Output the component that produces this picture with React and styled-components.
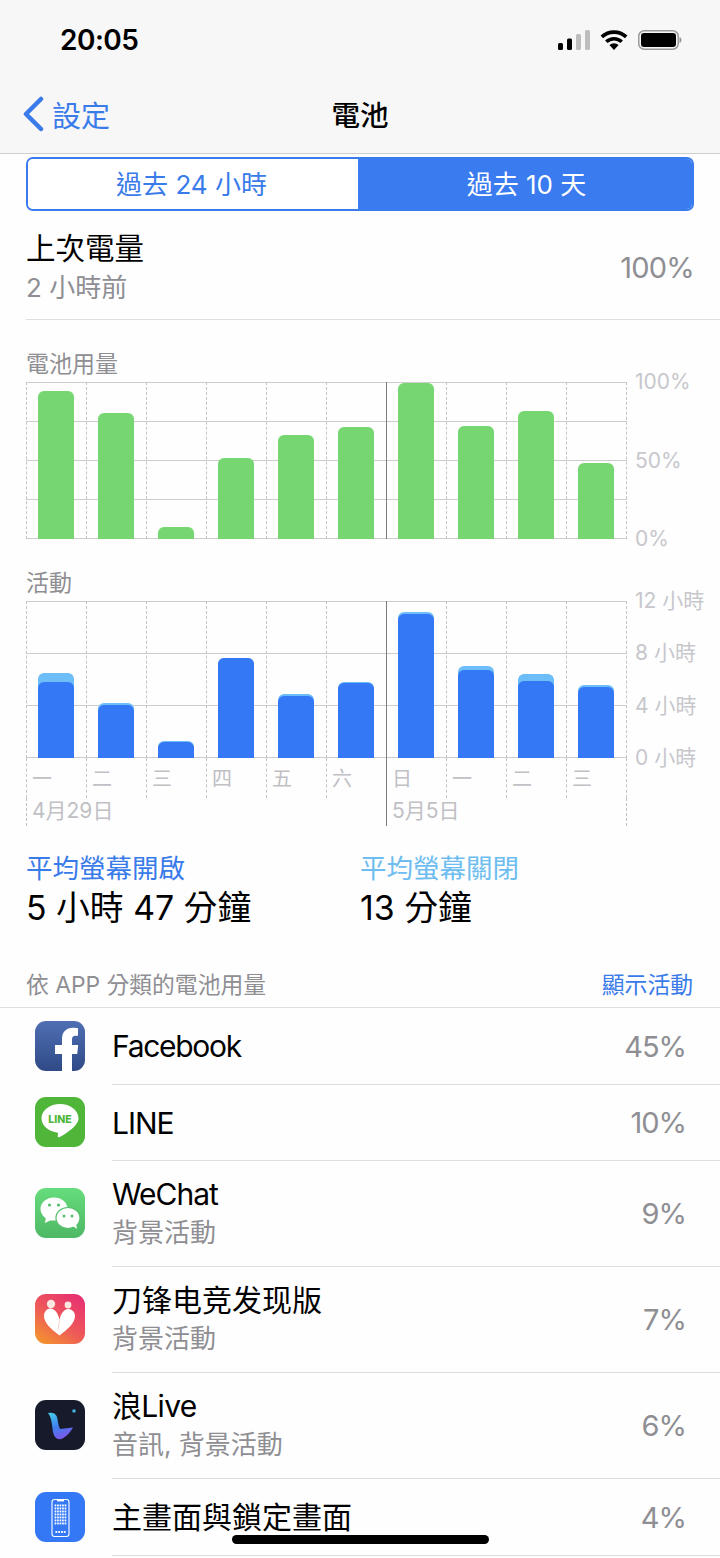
import styled, { createGlobalStyle } from "styled-components"

const batteryBars = [148, 126, 12, 81, 104, 112, 156, 113, 128, 76]
const activityBars = [
    { total: 85, screen: 76 },
    { total: 55, screen: 53 },
    { total: 17, screen: 16 },
    { total: 100, screen: 100 },
    { total: 64, screen: 62 },
    { total: 76, screen: 75 },
    { total: 146, screen: 144 },
    { total: 92, screen: 88 },
    { total: 84, screen: 77 },
    { total: 73, screen: 71 },
]
const days = ["一", "二", "三", "四", "五", "六", "日", "一", "二", "三"]

function FacebookIcon() {
    return (
        <svg width="50" height="50" viewBox="0 0 50 50">
            <defs>
                <linearGradient id="fb" x1="0" y1="0" x2="0" y2="1">
                    <stop offset="0" stopColor="#4f6fb4" />
                    <stop offset="1" stopColor="#2f4a86" />
                </linearGradient>
            </defs>
            <rect width="50" height="50" rx="11" fill="url(#fb)" />
            <path d="M37 50V33h5.200l1-9H37v-5.200c0-2.700.8-4 3.800-4H43V7.200c-.9-.2-2.900-.4-5-.4-6.600 0-11 4-11 11.200V24h-7v9h7v17z" fill="#fff" />
        </svg>
    )
}

function LineIcon() {
    return (
        <svg width="50" height="50" viewBox="0 0 50 50">
            <rect width="50" height="50" rx="11" fill="#4fb63a" />
            <path d="M25 7c-10.200 0-18.500 6.400-18.500 14.300 0 7.100 6.500 13 15.300 14.100 1.500.3 1.300 1 1 2.800-.1.800-.5 2.900 2 1.700 2.400-1.200 11-6.600 15-11 2.700-2.800 3.700-5 3.700-7.600C43.500 13.400 35.200 7 25 7z" fill="#fff" />
            <text x="25" y="25.500" textAnchor="middle" fontFamily="Inter, sans-serif" fontWeight="800" fontSize="10.500" fill="#4fb63a">LINE</text>
        </svg>
    )
}

function WeChatIcon() {
    return (
        <svg width="50" height="50" viewBox="0 0 50 50">
            <defs>
                <linearGradient id="wc" x1="0" y1="0" x2="0" y2="1">
                    <stop offset="0" stopColor="#66dc7c" />
                    <stop offset="1" stopColor="#4fb866" />
                </linearGradient>
            </defs>
            <rect width="50" height="50" rx="11" fill="url(#wc)" />
            <ellipse cx="19" cy="21" rx="13.500" ry="11.500" fill="#fff" />
            <path d="M11 29l-1 6 6-3z" fill="#fff" />
            <circle cx="14.500" cy="17" r="1.600" fill="#55bf6b" />
            <circle cx="23.500" cy="17" r="1.600" fill="#55bf6b" />
            <ellipse cx="33" cy="30" rx="12" ry="10.500" fill="#fff" stroke="#55bf6b" strokeWidth="1.200" />
            <path d="M38 38l4 3-1-6z" fill="#fff" />
            <circle cx="29" cy="28" r="1.500" fill="#55bf6b" />
            <circle cx="37" cy="28" r="1.500" fill="#55bf6b" />
        </svg>
    )
}

function HeartIcon() {
    return (
        <svg width="50" height="50" viewBox="0 0 50 50">
            <defs>
                <linearGradient id="ht" x1="0.85" y1="0" x2="0.15" y2="1">
                    <stop offset="0" stopColor="#e62f72" />
                    <stop offset="0.55" stopColor="#ee5a58" />
                    <stop offset="1" stopColor="#f3932e" />
                </linearGradient>
            </defs>
            <rect width="50" height="50" rx="11" fill="url(#ht)" />
            <circle cx="16" cy="10" r="4.200" fill="#fde6e0" />
            <circle cx="33" cy="11" r="3.400" fill="#fde6e0" />
            <path d="M24.500 41.500C16 35 9 29 9 22c0-4 2.500-7 6-7.500 4.500 0 8 4 9.500 11.500C26 19 29 15 33.500 15c4 .3 6.500 3.500 6.500 7 0 7-7 13-15.500 19.500z" fill="#fff" />
            <path d="M24.500 26l-1.500 10" fill="none" stroke="#f6c6c4" strokeWidth="0.800" />
        </svg>
    )
}

function LiveIcon() {
    return (
        <svg width="50" height="50" viewBox="0 0 50 50">
            <defs>
                <linearGradient id="lv" x1="0.1" y1="0" x2="0.5" y2="1">
                    <stop offset="0" stopColor="#46cbe6" />
                    <stop offset="0.55" stopColor="#3f7ff0" />
                    <stop offset="1" stopColor="#7d58e8" />
                </linearGradient>
            </defs>
            <rect width="50" height="50" rx="11" fill="#171a2b" />
            <path d="M13 13c4-1 8 0 9 4 1 4 1 8 3 12l13-1.500c-3 5.500-8 10.500-12 11.500-4 1-7-2-8-7-1-6-1-14-5-19z" fill="url(#lv)" />
            <circle cx="39" cy="11" r="1.800" fill="#3fb4e0" />
        </svg>
    )
}

function HomeIcon() {
    const dots = []
    for (let row = 0; row < 7; row++) {
        for (let col = 0; col < 5; col++) {
            dots.push(<rect key={`${row}-${col}`} x={19.6 + col * 2.5} y={12.5 + row * 3} width="1.700" height="1.900" fill="#fff" />)
        }
    }
    return (
        <svg width="50" height="50" viewBox="0 0 50 50">
            <rect width="50" height="50" rx="11" fill="#3478f6" />
            <rect x="17" y="7.500" width="17" height="37" rx="2.500" fill="none" stroke="#fff" strokeWidth="1.100" />
            <rect x="22" y="8" width="7" height="1.400" fill="#fff" />
            {dots}
            {[0, 1, 2, 3].map(i => (
                <rect key={i} x={20.4 + i * 2.8} y="39" width="1.800" height="1.900" fill="#fff" />
            ))}
        </svg>
    )
}

const apps = [
    { name: "Facebook", percent: "45%", icon: <FacebookIcon />, height: 77, spacing: -1.3 },
    { name: "LINE", percent: "10%", icon: <LineIcon />, height: 76, spacing: -1 },
    { name: "WeChat", sub: "背景活動", percent: "9%", icon: <WeChatIcon />, height: 106, spacing: -1 },
    { name: "刀锋电竞发现版", sub: "背景活動", percent: "7%", icon: <HeartIcon />, height: 106, spacing: 0 },
    { name: "浪Live", sub: "音訊, 背景活動", percent: "6%", icon: <LiveIcon />, height: 106, spacing: -0.7 },
    { name: "主畫面與鎖定畫面", percent: "4%", icon: <HomeIcon />, height: 77, spacing: 0 },
]

export default function App() {
    return (
        <Screen>
            <GlobalStyle />
            <Header>
                <StatusBar>
                    <Time>20:05</Time>
                    <StatusIcons>
                        <svg width="32" height="20" viewBox="0 0 32 20">
                            <rect x="0" y="13" width="5" height="7" rx="1.500" fill="#000" />
                            <rect x="9" y="8.500" width="5" height="11.500" rx="1.500" fill="#000" />
                            <rect x="18" y="4" width="5" height="16" rx="1.500" fill="#bdbdbd" />
                            <rect x="27" y="0" width="5" height="20" rx="1.500" fill="#bdbdbd" />
                        </svg>
                        <svg width="28" height="20" viewBox="0 0 28 20">
                            <path d="M14 20L9.400 15.100a6.800 6.800 0 0 1 9.200 0z" fill="#000" />
                            <path d="M6.300 11.800a11.200 11.200 0 0 1 15.400 0" fill="none" stroke="#000" strokeWidth="3.600" />
                            <path d="M1.800 6.900a18 18 0 0 1 24.400 0" fill="none" stroke="#000" strokeWidth="3.600" />
                        </svg>
                        <svg width="44" height="20" viewBox="0 0 44 20">
                            <rect x="0.750" y="0.750" width="39.500" height="18.500" rx="5.500" fill="none" stroke="#9a9a9a" strokeWidth="1.500" />
                            <rect x="3" y="3" width="35" height="14" rx="3" fill="#000" />
                            <path d="M41.500 7c1.200.4 2 1.500 2 3s-.8 2.600-2 3z" fill="#9a9a9a" />
                        </svg>
                    </StatusIcons>
                </StatusBar>
                <NavBar>
                    <BackLink>
                        <svg width="22" height="36" viewBox="0 0 22 36">
                            <path d="M19 3L4 18l15 15" fill="none" stroke="#3a7bea" strokeWidth="4.500" strokeLinecap="round" strokeLinejoin="round" />
                        </svg>
                        <span>設定</span>
                    </BackLink>
                    <NavTitle>電池</NavTitle>
                </NavBar>
            </Header>

            <Segment>
                <SegmentItem>過去 24 小時</SegmentItem>
                <SegmentItem $active>過去 10 天</SegmentItem>
            </Segment>

            <LastCharge>
                <div>
                    <LastTitle>上次電量</LastTitle>
                    <LastSub>2 小時前</LastSub>
                </div>
                <LastValue>100%</LastValue>
            </LastCharge>

            <ChartSection>
                <ChartLabel>電池用量</ChartLabel>
                <ChartRow>
                    <Plot $step={39}>
                        {batteryBars.map((h, i) => (
                            <Column key={i} $index={i}>
                                <Bar $height={h} $color="#76d672" />
                            </Column>
                        ))}
                    </Plot>
                    <Axis>
                        <span>100%</span>
                        <span>50%</span>
                        <span>0%</span>
                    </Axis>
                </ChartRow>

                <ChartLabel>活動</ChartLabel>
                <ChartRow>
                    <Plot $step={52}>
                        {activityBars.map((bar, i) => (
                            <Column key={i} $index={i}>
                                <Bar $height={bar.total} $color="#6dbdf8">
                                    <Bar $height={bar.screen} $color="#3478f6" />
                                </Bar>
                            </Column>
                        ))}
                    </Plot>
                    <Axis>
                        <span>12 小時</span>
                        <span>8 小時</span>
                        <span>4 小時</span>
                        <span>0 小時</span>
                    </Axis>
                </ChartRow>
                <DayRow>
                    {days.map((day, i) => (
                        <DayCell key={i} $index={i}>{day}</DayCell>
                    ))}
                </DayRow>
                <DateRow>
                    <DateCell>4月29日</DateCell>
                    <DateCell $second>5月5日</DateCell>
                </DateRow>
            </ChartSection>

            <Stats>
                <div>
                    <StatLabel>平均螢幕開啟</StatLabel>
                    <StatValue>5 小時 47 分鐘</StatValue>
                </div>
                <div>
                    <StatLabel $light>平均螢幕關閉</StatLabel>
                    <StatValue>13 分鐘</StatValue>
                </div>
            </Stats>

            <ListHeader>
                <span>依 APP 分類的電池用量</span>
                <ShowActivity>顯示活動</ShowActivity>
            </ListHeader>

            <AppList>
                {apps.map(app => (
                    <AppRow key={app.name}>
                        <AppIcon>{app.icon}</AppIcon>
                        <AppBody $height={app.height}>
                            <div>
                                <AppName $spacing={app.spacing}>{app.name}</AppName>
                                {app.sub && <AppSub>{app.sub}</AppSub>}
                            </div>
                            <AppPercent>{app.percent}</AppPercent>
                        </AppBody>
                    </AppRow>
                ))}
            </AppList>

            <HomeIndicator />
        </Screen>
    )
}

const GlobalStyle = createGlobalStyle`
  html, body {
    margin: 0;
    padding: 0;
    background: #fff;
  }
  * {
    box-sizing: border-box;
  }
`

const Screen = styled.div`
  position: relative;
  width: 720px;
  height: 1558px;
  overflow: hidden;
  background: #fefefe;
  color: #000;
  font-family: Inter, "Noto Sans CJK TC", sans-serif;
`

const Header = styled.header`
  height: 154px;
  background: #f7f7f7;
  border-bottom: 1px solid #cfcfcf;
`

const StatusBar = styled.div`
  height: 78px;
  display: flex;
  align-items: center;
  justify-content: space-between;
  padding: 2px 38px 0 60px;
`

const Time = styled.div`
  font-size: 28px;
  font-weight: 600;
  letter-spacing: -0.5px;
`

const StatusIcons = styled.div`
  display: flex;
  align-items: center;
  gap: 10px;
`

const NavBar = styled.nav`
  display: grid;
  grid-template-columns: 1fr auto 1fr;
  align-items: center;
  height: 75px;
  padding: 0 0 4px 22px;
`

const BackLink = styled.div`
  display: flex;
  align-items: center;
  gap: 8px;
  color: #3a7bea;
  font-size: 29px;
`

const NavTitle = styled.div`
  font-size: 28.5px;
  font-weight: 500;
  transform: translateX(-11px);
`

const Segment = styled.div`
  display: grid;
  grid-template-columns: 330px 1fr;
  height: 54px;
  margin: 3px 26px 0;
  border: 2px solid #3a7bf0;
  border-radius: 7px;
  overflow: hidden;
  background: #fff;
`

const SegmentItem = styled.div`
  display: flex;
  align-items: center;
  justify-content: center;
  padding: 0 ${p => (p.$active ? 0 : 3)}px 4px ${p => (p.$active ? 3 : 0)}px;
  font-size: 26px;
  background: ${p => (p.$active ? "#3a7bf0" : "#fff")};
  color: ${p => (p.$active ? "#fff" : "#3a7bea")};
`

const LastCharge = styled.div`
  display: flex;
  align-items: center;
  justify-content: space-between;
  height: 109px;
  margin-left: 26px;
  padding: 4px 26px 0 0;
  border-bottom: 1px solid #dedede;
`

const LastTitle = styled.div`
  font-size: 29.5px;
  line-height: 40px;
`

const LastSub = styled.div`
  margin-top: 1px;
  font-size: 26px;
  line-height: 38px;
  color: #8e8e93;
`

const LastValue = styled.div`
  font-size: 29px;
  letter-spacing: -0.8px;
  color: #8e8e93;
`

const ChartSection = styled.section`
  padding-left: 26px;
`

const ChartLabel = styled.div`
  margin-top: 30px;
  margin-bottom: 4px;
  font-size: 23px;
  line-height: 28px;
  color: #8e8e93;
`

const ChartRow = styled.div`
  display: flex;
  gap: 8px;
`

const Plot = styled.div`
  display: grid;
  grid-template-columns: repeat(10, 60px);
  width: 601px;
  height: 157px;
  border-right: 1px dashed #c4c4c4;
  background-image: linear-gradient(to bottom, #cdcdcd 1px, transparent 1px);
  background-size: 100% ${p => p.$step}px;
`

const dividerColor = p => (p.$index === 6 ? "#7c7c7c" : "#c4c4c4")

const Column = styled.div`
  display: flex;
  align-items: flex-end;
  padding-left: 11px;
  border-left: 1px ${p => (p.$index === 6 ? "solid" : "dashed")} ${dividerColor};
`

const Bar = styled.div`
  display: flex;
  align-items: flex-end;
  width: 36px;
  height: ${p => p.$height}px;
  border-radius: 6px 6px 0 0;
  background: ${p => p.$color};
`

const Axis = styled.div`
  display: flex;
  flex-direction: column;
  justify-content: space-between;
  height: 157px;
  font-size: 21px;
  line-height: 0;
  color: #c7c7cc;
  white-space: nowrap;
`

const DayRow = styled.div`
  display: grid;
  grid-template-columns: repeat(10, 60px);
  width: 601px;
  height: 40px;
  border-right: 1px dashed #c4c4c4;
`

const DayCell = styled.div`
  padding: 9px 0 0 5px;
  font-size: 20px;
  line-height: 24px;
  color: #c0c0c5;
  border-left: 1px ${p => (p.$index === 6 ? "solid" : "dashed")} ${dividerColor};
`

const DateRow = styled.div`
  display: grid;
  grid-template-columns: 360px 1fr;
  width: 601px;
  height: 28px;
  border-right: 1px dashed #c4c4c4;
`

const DateCell = styled.div`
  padding-left: 5px;
  font-size: 21px;
  line-height: 25px;
  color: #c0c0c5;
  border-left: 1px ${p => (p.$second ? "solid #7c7c7c" : "dashed #c4c4c4")};
`

const Stats = styled.section`
  display: grid;
  grid-template-columns: 334px 1fr;
  margin: 25px 0 0 26px;
`

const StatLabel = styled.div`
  font-size: 26.5px;
  line-height: 34px;
  color: ${p => (p.$light ? "#6dbdf0" : "#3a7bea")};
`

const StatValue = styled.div`
  margin-top: 1px;
  font-size: 33.8px;
  line-height: 44px;
`

const ListHeader = styled.div`
  display: flex;
  align-items: center;
  justify-content: space-between;
  height: 38px;
  margin-top: 40px;
  padding: 0 27px 11px 26px;
  border-bottom: 1px solid #dedede;
  font-size: 22.8px;
  color: #8e8e93;
`

const ShowActivity = styled.span`
  color: #3a7bea;
`

const AppList = styled.div`
  display: flex;
  flex-direction: column;
`

const AppRow = styled.div`
  display: flex;
  align-items: center;
`

const AppIcon = styled.div`
  display: flex;
  flex: 0 0 112px;
  padding: 0 0 2px 35px;
`

const AppBody = styled.div`
  flex: 1;
  display: flex;
  align-items: center;
  justify-content: space-between;
  height: ${p => p.$height}px;
  padding-right: 34px;
  border-bottom: 1px solid #dedede;
`

const AppName = styled.div`
  font-size: 30px;
  line-height: 38px;
  letter-spacing: ${p => p.$spacing}px;
`

const AppSub = styled.div`
  margin-top: 1px;
  font-size: 26px;
  line-height: 38px;
  color: #8e8e93;
`

const AppPercent = styled.div`
  font-size: 29px;
  letter-spacing: -1px;
  color: #8e8e93;
`

const HomeIndicator = styled.div`
  position: absolute;
  left: 232px;
  bottom: 14px;
  width: 257px;
  height: 9px;
  border-radius: 5px;
  background: #000;
`
